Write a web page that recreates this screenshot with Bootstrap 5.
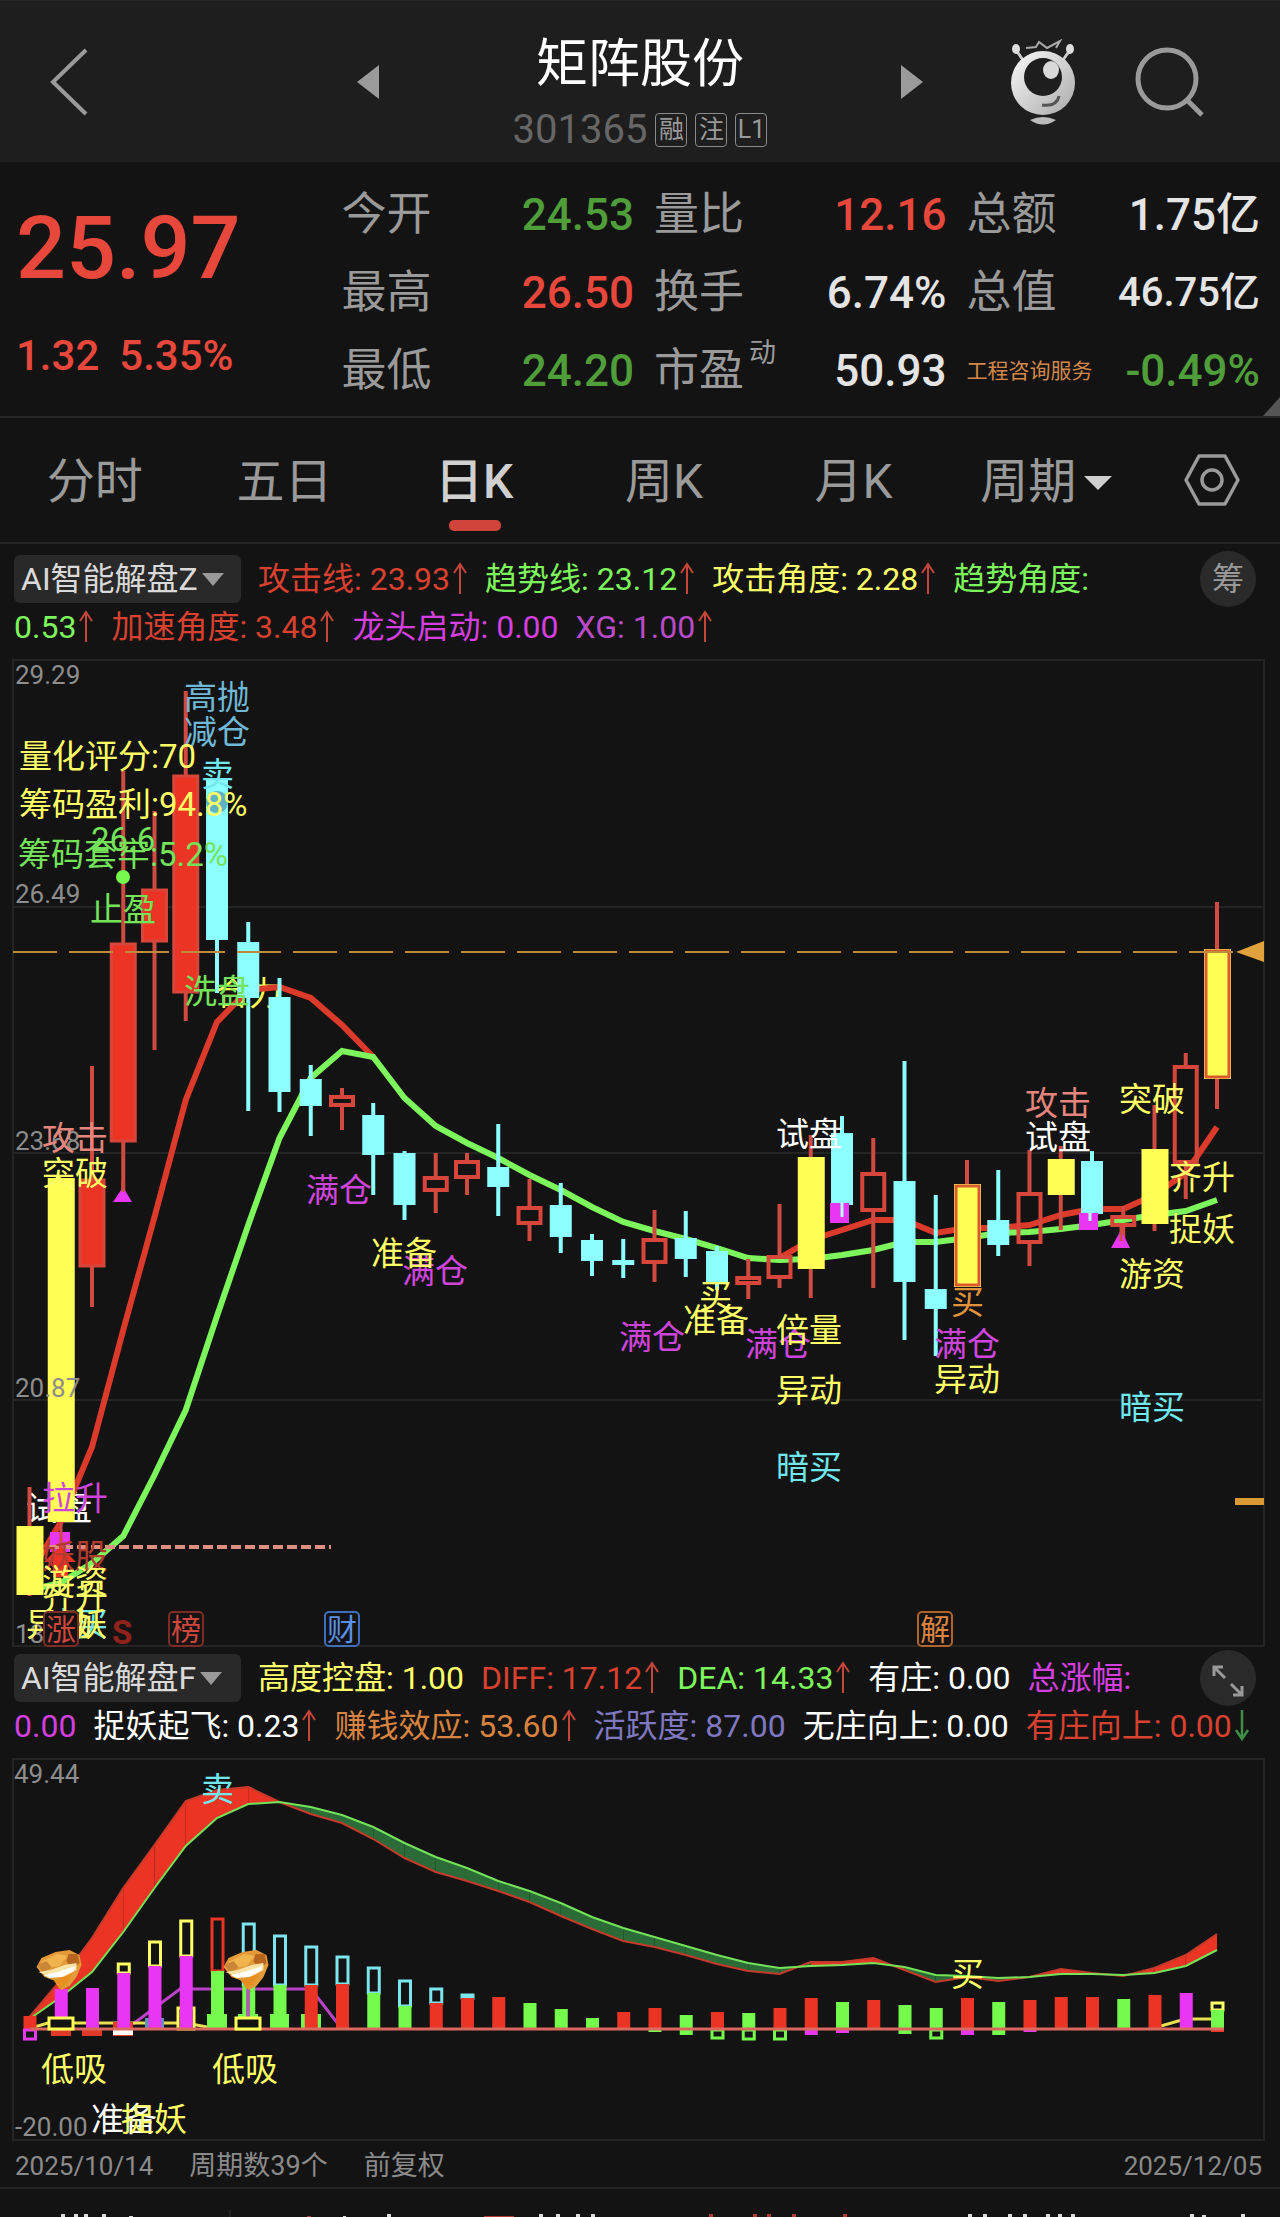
<!DOCTYPE html>
<html lang="zh-CN" data-bs-theme="dark">
<head>
<meta charset="utf-8">
<meta name="viewport" content="width=device-width, initial-scale=1">
<title>矩阵股份 301365</title>
<link href="https://cdn.jsdelivr.net/npm/bootstrap@5.3.0/dist/css/bootstrap.min.css" rel="stylesheet">
<style>
body{background:#131313;color:#e4e4e4;font-family:Roboto,"Noto Sans CJK SC",sans-serif;overflow-x:hidden}
button,a{color:inherit;font:inherit;text-decoration:none}
.plain-btn{background:none;border:0;padding:0;line-height:1}
.topbar{background:#1e1e1e;height:162px;border-top:1px solid #262626}
.side-l{width:380px;padding-left:48px}
.side-r{width:380px;gap:55px;padding-right:75px}
.stock-name{font-size:52px;line-height:64px;color:#fff;margin:32px 0 11px;font-weight:400}
.stock-code{font-size:40px;line-height:44px;color:#666}
.flag{font-size:25px;line-height:32px;height:34px;width:32px;border:1px solid #8a8a8a;border-radius:4px;color:#9a9a9a;text-align:center}
.quote{height:256px;border-bottom:2px solid #262626;padding:14px 20px 0 16px;display:grid;grid-template-columns:305fr 292fr 292fr 293fr;column-gap:20px}
.quote dl{margin:0}
.q-line{display:flex;justify-content:space-between;align-items:center;height:78px}
.q-line dt{font-weight:400;font-size:45px;color:#9a9a9a;line-height:60px;white-space:nowrap}
.q-line dd{margin:0;font-size:44px;line-height:60px;white-space:nowrap;font-weight:500}
.q-line dd.cap{font-size:40px}
.q-line dt.sector{font-size:21px;color:#d2884a}
.q-line sup{font-size:27px;top:-24px;line-height:1;margin-left:5px}
.q-price{font-size:88px;line-height:100px;font-weight:500;padding-top:22px}
.q-chg{font-size:42px;line-height:50px;padding-top:33px;gap:20px;font-weight:500}
.up{color:#e8473c}.down{color:#4f9e3a}
.fold{right:0;bottom:0;border-left:17px solid transparent;border-bottom:19px solid #555}
.tabs{height:126px;border-bottom:2px solid #242424;font-size:48px;color:#9a9a9a}
.tabs a{flex:190 0 0;text-align:center;line-height:128px;position:relative}
.tabs .cycle{flex:196 0 0}
.tabs .gear{flex:136 0 0;padding-bottom:2px}
.tabs a.on{color:#d0d0d0;font-weight:500}
.tabs a.on::after{content:"";position:absolute;left:50%;margin-left:-25px;bottom:11px;width:52px;height:11px;border-radius:5px;background:#cf453b}
.legend-box{padding:11px 0 1px 14px;font-size:32px;line-height:48px;white-space:pre;position:relative}
.legend-box.second{padding-top:4px;padding-bottom:2px}
.l-row{display:flex;height:48px;gap:17px}
.pick{background:#292929;color:#dadada;border:0;border-radius:6px;padding:0 10px 0 7px;height:48px;width:227px;line-height:48px;display:flex;align-items:center;gap:4px}
.l-row svg.ar{width:16px;height:34px;margin-left:2px;vertical-align:-5px}
.round{position:absolute;right:24px;top:7px;width:56px;height:56px;border-radius:50%;background:#2a2a2a;border:0;color:#999;padding:0;line-height:56px}
.second .round{top:0}
.c-r{color:#d8402f}.c-g{color:#7df55c}.c-y{color:#ffff6a}.c-m{color:#d53fe0}.c-p{color:#b94bc8}.c-w{color:#fff}.c-o{color:#d88440}.c-v{color:#7f78c0}
.plot{display:block;width:100%;height:auto}
.plot text{font-size:33px}
.plot .ax{font-size:26px;fill:#8d8d8d}
.plot .tg{font-size:30px}
.foot{height:45px;padding:0 18px 0 15px;gap:36px;font-size:27px;color:#8a8a8a;border-bottom:2px solid #242424;line-height:38px}
.foot time{font-size:26px}
</style>
<script src="https://cdn.jsdelivr.net/npm/bootstrap@5.3.0/dist/js/bootstrap.bundle.min.js"></script>
</head>
<body>
<svg width="0" height="0" class="position-absolute" aria-hidden="true">
 <symbol id="au" viewBox="0 0 16 34"><path d="M8 33V3M2 12L8 3l6 9" fill="none" stroke="#c4463b" stroke-width="2"/></symbol>
 <symbol id="ad" viewBox="0 0 16 34"><path d="M8 2v29M2 22l6 9 6-9" fill="none" stroke="#3f8f49" stroke-width="2.5"/></symbol>
 <symbol id="gem" viewBox="0 0 46 40">
  <path d="M1 17L6 8 20 2 34 0 44 5 46 15 41 27 34 36 26 40 20 31 9 27Z" fill="#e39a38"/>
  <path d="M6 12L22 4 32 6 24 16 10 18Z" fill="#f2b54e"/><path d="M33 4h9l2 9-8 6-5-8Z" fill="#b8661f"/>
  <path d="M2 15l9-4 5 6-8 6Z" fill="#c98638"/><path d="M3 22l12-2 14-5 12-2v7l-13 7-15-1Z" fill="#fbe3a8"/>
  <path d="M8 25l14-3 18-6-2 5-12 6-12 1Z" fill="#fffefa"/><path d="M18 30l19-6-8 12-5 3Z" fill="#e88f22"/>
 </symbol>
</svg>

<header class="topbar d-flex">
 <div class="side-l d-flex align-items-center">
  <button class="plain-btn" aria-label="返回"><svg width="44" height="70" viewBox="0 0 44 70"><path d="M38 3L5 35l33 32" fill="none" stroke="#9a9a9a" stroke-width="4"/></svg></button>
  <button class="plain-btn ms-auto" aria-label="上一只"><svg width="24" height="34" viewBox="0 0 24 34"><path d="M23 0v34L1 17z" fill="#9b9b9b"/></svg></button>
 </div>
 <div class="flex-fill text-center">
  <h1 class="stock-name">矩阵股份</h1>
  <div class="d-flex justify-content-center align-items-center gap-1 stock-code"><span>301365</span><span class="flag ms-1">融</span><span class="flag ms-1">注</span><span class="flag ms-1">L1</span></div>
 </div>
 <div class="side-r d-flex align-items-center">
  <button class="plain-btn me-auto" aria-label="下一只"><svg width="24" height="34" viewBox="0 0 24 34"><path d="M1 0v34L23 17z" fill="#9b9b9b"/></svg></button>
  <button class="plain-btn" aria-label="助手"><svg width="70" height="86" viewBox="0 0 70 86">
   <defs><linearGradient id="rb" x1="0" y1="0" x2="1" y2="1"><stop offset="0" stop-color="#fafafa"/><stop offset="1" stop-color="#a9a9a9"/></linearGradient></defs>
   <path d="M17 24Q13 18 8 11M53 24Q57 18 62 11" stroke="#ccc" stroke-width="3" fill="none"/>
   <ellipse cx="8" cy="10" rx="4" ry="5" fill="#ddd"/><ellipse cx="62" cy="10" rx="4" ry="5" fill="#ddd"/>
   <path d="M18 9l10-1 3-5 8 6 13-7-4 7" stroke="#aaa" stroke-width="2" fill="none"/>
   <circle cx="35" cy="44" r="32" fill="url(#rb)"/><circle cx="35" cy="38" r="19" fill="#1e1e1e"/>
   <ellipse cx="43" cy="31" rx="8" ry="9" fill="#d9d9d9"/><path d="M34 66q15 2 17-9" stroke="#555" stroke-width="3" fill="none"/>
   <path d="M22 81q13-6 26 0-13 9-26 0" fill="#bbb"/></svg></button>
  <button class="plain-btn" aria-label="搜索"><svg width="72" height="74" viewBox="0 0 72 74"><circle cx="34" cy="34" r="29" fill="none" stroke="#9a9a9a" stroke-width="5"/><path d="M54 55l15 15" stroke="#9a9a9a" stroke-width="5"/></svg></button>
 </div>
</header>

<section class="quote position-relative">
 <div class="up"><div class="q-price">25.97</div><div class="q-chg d-flex"><span>1.32</span><span>5.35%</span></div></div>
 <dl>
  <div class="q-line"><dt>今开</dt><dd class="down">24.53</dd></div>
  <div class="q-line"><dt>最高</dt><dd class="up">26.50</dd></div>
  <div class="q-line"><dt>最低</dt><dd class="down">24.20</dd></div>
 </dl>
 <dl>
  <div class="q-line"><dt>量比</dt><dd class="up">12.16</dd></div>
  <div class="q-line"><dt>换手</dt><dd>6.74%</dd></div>
  <div class="q-line"><dt>市盈<sup>动</sup></dt><dd>50.93</dd></div>
 </dl>
 <dl>
  <div class="q-line"><dt>总额</dt><dd>1.75亿</dd></div>
  <div class="q-line"><dt>总值</dt><dd class="cap">46.75亿</dd></div>
  <div class="q-line"><dt class="sector">工程咨询服务</dt><dd class="down">-0.49%</dd></div>
 </dl>
 <span class="fold position-absolute"></span>
</section>

<nav class="tabs d-flex">
 <a href="#">分时</a><a href="#">五日</a><a href="#" class="on">日K</a><a href="#">周K</a><a href="#">月K</a>
 <a href="#" class="cycle">周期<svg width="28" height="14" viewBox="0 0 28 14" class="align-middle ms-2 mb-1"><path d="M0 0h28L14 14z" fill="#cfcfcf"/></svg></a>
 <button class="plain-btn gear" aria-label="设置"><svg width="56" height="52" viewBox="0 0 56 52"><path d="M15 2h26l13 24-13 24H15L2 26z" fill="none" stroke="#9a9a9a" stroke-width="3.5" stroke-linejoin="round"/><circle cx="28" cy="26" r="10" fill="none" stroke="#9a9a9a" stroke-width="3.5"/></svg></button>
</nav>

<section class="legend-box"><div class="l-row"><button class="pick">AI智能解盘Z<svg width="22" height="13" viewBox="0 0 22 13"><path d="M0 0h22L11 13z" fill="#999"/></svg></button><span class="c-r">攻击线: 23.93<svg class="ar"><use href="#au"/></svg></span><span class="c-g">趋势线: 23.12<svg class="ar"><use href="#au"/></svg></span><span class="c-y">攻击角度: 2.28<svg class="ar"><use href="#au"/></svg></span><span class="c-g">趋势角度:</span></div><div class="l-row"><span class="c-g">0.53<svg class="ar"><use href="#au"/></svg></span><span class="c-r">加速角度: 3.48<svg class="ar"><use href="#au"/></svg></span><span class="c-m">龙头启动: 0.00</span><span class="c-p">XG: 1.00<svg class="ar"><use href="#au"/></svg></span></div><button class="round">筹</button></section>

<svg class="plot" viewBox="0 652 1280 998" role="img" aria-label="日K线图">
 <path d="M13 660H1264V1646H13ZM13 907H1264M13 1153H1264M13 1400H1264" fill="none" stroke="#242424" stroke-width="2"/>
 <path d="M1264 941V962L1236 952Z" fill="#e0a23c"/><path d="M1235 1501.500H1264" stroke="#d99a34" stroke-width="7"/>
 <g fill="#ffff55"><text x="216" y="1005">合力</text></g>
 <text x="26" y="1520" fill="#fff">试盘</text>
 <g id="ma"></g>
 <g id="candles"></g>
 <g><text class="ax" x="15" y="684">29.29</text><text class="ax" x="15" y="903">26.49</text><text class="ax" x="15" y="1150">23.68</text><text class="ax" x="15" y="1397">20.87</text><text class="ax" x="15" y="1643">18.06</text></g>
 <path d="M13 952H1236" stroke="#c08a3c" stroke-width="2" stroke-dasharray="44 12"/>
 <g fill="#e837f2"><path d="M830 1203h19v20h-19zM1079 1213h19v17h-19zM50 1532h20v20H50zM113 1202h19l-9-15zM1111 1248h19l-9-18z"/></g>
 <path d="M123 1180v12M1121 1227v14M61 1522v40" stroke="#cf4a40" stroke-width="3"/><path d="M842 1203v14M1090 1213v8" stroke="#bff" stroke-width="3"/>
 <path d="M60 1546L76 1562H68V1577H53V1562H44Z" fill="#eb3424"/>
 <path d="M49 1547H331" stroke="#de8f82" stroke-width="4" stroke-dasharray="10 4"/>
 <circle cx="217" cy="802" r="11" fill="#5fb3c4"/><circle cx="123" cy="877" r="7" fill="#74fb4c"/>
 <g fill="#6fb9d6"><text x="184" y="709">高抛</text><text x="184" y="744">减仓</text></g>
 <g fill="#70e8ee"><text x="201" y="786">卖</text><text x="776" y="1479">暗买</text><text x="1119" y="1419">暗买</text><text x="42" y="1636">暗买</text></g>
 <g fill="#74e35a"><text x="18" y="866">筹码套牢:5.2%</text><text x="91" y="851">26.6</text><text x="90" y="921">止盈</text><text x="184" y="1003">洗盘</text></g>
 <g fill="#e3857c"><text x="42" y="1150">攻击</text><text x="1025" y="1115">攻击</text></g>
 <text x="42" y="1568" fill="#b23a2f">妖股</text>
 <g fill="#cf45dc"><text x="42" y="1510">拉升</text><text x="306" y="1202">满仓</text><text x="402" y="1283">满仓</text><text x="619" y="1349">满仓</text><text x="745" y="1356">满仓</text><text x="934" y="1356">满仓</text></g>
 <g fill="#fff"><text x="776" y="1146">试盘</text><text x="1025" y="1149">试盘</text></g>
 <g fill="#ffff66"><text x="19" y="768">量化评分:70</text><text x="19" y="816">筹码盈利:94.8%</text><text x="42" y="1185">突破</text><text x="371" y="1265">准备</text><text x="699" y="1308">买</text><text x="683" y="1332">准备</text><text x="776" y="1342">倍量</text><text x="776" y="1402">异动</text><text x="934" y="1391">异动</text><text x="1119" y="1111">突破</text><text x="1119" y="1286">游资</text><text x="1169" y="1189">齐升</text><text x="1169" y="1241">捉妖</text><text x="42" y="1593">游资</text><text x="42" y="1609">齐升</text><text x="26" y="1636">异动</text><text x="74" y="1636">妖</text></g>
 <text x="951" y="1314" fill="#e0933c">买</text>
 <g fill="#131313" stroke-width="2"><rect x="44" y="1612" width="34" height="34" rx="4" stroke="#7c2b26"/><rect x="169" y="1612" width="34" height="34" rx="4" stroke="#7c2b26"/><rect x="325" y="1612" width="34" height="34" rx="4" stroke="#3f6fb8"/><rect x="918" y="1612" width="34" height="34" rx="4" stroke="#b0642c"/></g>
 <g fill="#cf473d"><text class="tg" x="46" y="1640">涨</text><text class="tg" x="171" y="1640">榜</text><text class="tg" x="327" y="1640" fill="#5a90e6">财</text><text class="tg" x="920" y="1640" fill="#dd8440">解</text></g>
 <text x="112" y="1644" fill="#8f231c" font-weight="700">S</text>
</svg>

<section class="legend-box second"><div class="l-row"><button class="pick">AI智能解盘F<svg width="22" height="13" viewBox="0 0 22 13"><path d="M0 0h22L11 13z" fill="#999"/></svg></button><span class="c-y">高度控盘: 1.00</span><span class="c-r">DIFF: 17.12<svg class="ar"><use href="#au"/></svg></span><span class="c-g">DEA: 14.33<svg class="ar"><use href="#au"/></svg></span><span class="c-w">有庄: 0.00</span><span class="c-m">总涨幅:</span></div><div class="l-row"><span class="c-m">0.00</span><span class="c-w">捉妖起飞: 0.23<svg class="ar"><use href="#au"/></svg></span><span class="c-o">赚钱效应: 53.60<svg class="ar"><use href="#au"/></svg></span><span class="c-v">活跃度: 87.00</span><span class="c-w">无庄向上: 0.00</span><span class="c-r">有庄向上: 0.00<svg class="ar"><use href="#ad"/></svg></span></div><button class="round" aria-label="展开"><svg width="32" height="32" viewBox="0 0 32 32"><path d="M2 11V2h9M2 2l11 11M30 21v9h-9M30 30L19 19" fill="none" stroke="#999" stroke-width="3"/></svg></button></section>

<svg class="plot" viewBox="0 1752 1280 392" role="img" aria-label="指标图">
 <path d="M13 1759H1264V2140H13Z" fill="none" stroke="#242424" stroke-width="2"/>
 <text class="ax" x="14" y="1783">49.44</text><text class="ax" x="15" y="2136">-20.00</text>
 <g id="cloud"></g>
 <path d="M133 2024L180 1989H311L342 2029" fill="none" stroke="#b843c6" stroke-width="3"/>
 <path d="M31 2028L48 2023H186L207 2027M1161 2026L1185 2019H1217" fill="none" stroke="#e8e050" stroke-width="3"/>
 <path d="M51 2029h20v7H51zM82 2029h20v7H82zM113 2022h20v14H113z" fill="#e03a28"/><path d="M113 2030h20v5H113z" fill="#fff"/>
 <path d="M145 2018h19v11H145z" fill="#5f93ba"/><path d="M178 2008h16v21h-16z" fill="#131313" stroke="#ffff55" stroke-width="3"/>
 <path d="M207 2014h20v15h-20zM238 2014h20v15h-20zM270 2014h19v15h-19zM301 2014h20v15h-20z" fill="#74fb4c"/>
 <g id="bars"></g>
 <path d="M30 2029H1224" stroke="#d9685e" stroke-width="3"/>
 <path d="M248 1988v30" stroke="#a765a8" stroke-width="4"/>
 <path d="M49 2018h24v11H49zM236 2018h24v11H236z" fill="#131313" stroke="#ffff55" stroke-width="3"/>
 <use href="#gem" x="35" y="1950" width="47" height="40"/><use href="#gem" x="222" y="1950" width="47" height="40"/>
 <text x="201" y="1801" fill="#70e8ee">卖</text>
 <g fill="#ffff66"><text x="951" y="1986">买</text><text x="41" y="2081">低吸</text><text x="212" y="2081">低吸</text></g>
 <text x="91" y="2131" fill="#fff">准备</text><text x="121" y="2131" fill="#ffff66">捉妖</text>
</svg>

<footer>
 <div class="foot d-flex align-items-center"><time>2025/10/14</time><span>周期数39个</span><span>前复权</span><time class="ms-auto">2025/12/05</time></div>
 <svg class="plot" viewBox="0 2189 1280 28" aria-hidden="true"><path d="M230 2210v7" stroke="#333"/><path d="M61 2214h4v3h-4zM74 2214h4v3h-4zM84 2214h4v3h-4zM102 2214h4v3h-4zM129 2216h4v1h-4zM387 2214h4v3h-4zM343 2216h3v1h-3zM539 2214h4v3h-4zM556 2214h4v3h-4zM576 2214h4v3h-4zM591 2214h4v3h-4zM968 2214h4v3h-4zM983 2214h4v3h-4zM1008 2214h4v3h-4zM1023 2214h4v3h-4zM1046 2214h4v3h-4zM1058 2214h4v3h-4zM1071 2214h4v3h-4zM1190 2214h4v3h-4zM1202 2215h4v2h-4zM1241 2214h4v3h-4z" fill="#ddd"/><path d="M307 2216h4v1h-4zM484 2216h30v1h-30zM709 2214h4v3h-4zM753 2214h4v3h-4zM767 2214h4v3h-4zM792 2214h4v3h-4zM843 2214h4v3h-4z" fill="#b23a30"/></svg>
</footer>

<script>
const X = i => 29.5 + 31.25 * i;
const put = (id, html) => { document.getElementById(id).innerHTML = html; };
// [kind, high, bodyTop, bodyBottom, low]; y yellow, r filled red, c cyan, h hollow red, o outlined yellow
const K = [['y',1487,1526,1595,1596],['y',1178,1178,1522,1522],['r',1066,1179,1267,1307],['r',771,943,1142,1192],['r',811,889,942,1050],['r',691,775,993,1021],['c',778,780,940,993],['c',922,942,998,1111],['c',978,997,1092,1112],['c',1065,1079,1106,1136],['h',1088,1095,1107,1130],['c',1103,1115,1155,1195],['c',1151,1153,1205,1220],['h',1153,1176,1192,1213],['h',1153,1160,1179,1195],['c',1124,1167,1187,1216],['h',1179,1206,1225,1241],['c',1183,1205,1237,1253],['c',1234,1240,1261,1276],['c',1239,1260,1265,1278],['h',1210,1238,1264,1282],['c',1211,1238,1259,1277],['c',1246,1251,1283,1290],['h',1259,1276,1285,1299],['h',1204,1255,1279,1288],['y',1135,1157,1269,1298],['c',1116,1133,1205,1217],['h',1138,1172,1212,1288],['c',1061,1181,1282,1340],['c',1195,1289,1309,1356],['o',1160,1184,1287,1287],['c',1170,1220,1245,1256],['h',1150,1192,1244,1266],['y',1146,1159,1195,1230],['c',1151,1161,1214,1221],['h',1206,1215,1227,1240],['y',1105,1149,1224,1231],['h',1053,1065,1164,1199],['o',902,949,1079,1109]];
const rect = (x, y, w, h, a) => `<rect x="${x}" y="${y}" width="${w}" height="${h}" ${a}/>`;
put('candles', K.map(([k, hi, t, b, lo], i) => {
  const x = X(i), col = k === 'c' ? '#8cffff' : '#cf4a40';
  let s = `<path d="M${x} ${hi}V${t}M${x} ${b}V${lo}" stroke="${col}" stroke-width="4"/>`;
  if (k === 'y') s += rect(x - 13, t, 27, b - t, 'fill="#ffff55"');
  if (k === 'c') s += rect(x - 11, t, 22, b - t, 'fill="#8cffff"');
  if (k === 'r') s += rect(x - 12, t + 1, 24, b - t - 2, 'fill="#eb3424" stroke="#d8453a" stroke-width="3"');
  if (k === 'h') s += rect(x - 11, t + 2, 22, b - t - 4, 'fill="none" stroke="#d8453a" stroke-width="4"');
  if (k === 'o') s += rect(x - 13, t, 27, b - t, 'fill="#ffff66"') + rect(x - 11, t + 2, 23, b - t - 4, 'fill="#ffff55" stroke="#d95a2c" stroke-width="3"');
  return s;
}).join(''));
const line = (a, s, c, w) => `<polyline points="${a.map((y, i) => X(i + s) + ',' + y).join(' ')}" fill="none" stroke="${c}" stroke-width="${w}"/>`;
put('ma',
  line([1575,1522,1447,1330,1217,1100,1022,990,987,998,1025,1057], 0, '#dc3a2a', 6) +
  line([1258,1240,1230,1220,1220,1233,1228,1228,1225,1215,1209,1209,1195,1173,1127], 24, '#dc3a2a', 6) +
  line([1590,1583,1563,1536,1475,1410,1316,1225,1138,1078,1051,1057,1098,1126,1143,1158,1175,1190,1207,1222,1231,1239,1248,1258,1260,1259,1255,1250,1242,1242,1238,1233,1232,1229,1225,1220,1215,1211,1200], 0, '#7df55c', 6));
const diff = [2017,1980,1938,1888,1845,1801,1790,1787,1802,1814,1823,1839,1858,1872,1881,1891,1902,1916,1929,1941,1947,1955,1964,1971,1974,1962,1962,1958,1970,1982,1977,1981,1977,1969,1973,1976,1968,1955,1934];
const dea = [2019,1997,1972,1932,1888,1846,1818,1804,1802,1807,1815,1827,1843,1857,1868,1881,1891,1903,1917,1928,1937,1946,1955,1963,1968,1966,1965,1963,1967,1975,1976,1978,1977,1974,1974,1975,1973,1966,1950];
let cloud = '';
for (let i = 0; i < 38; i++) {
  const up = diff[i] + diff[i + 1] < dea[i] + dea[i + 1];
  cloud += `<path d="M${X(i)} ${diff[i]}L${X(i + 1)} ${diff[i + 1]}V${dea[i + 1]}L${X(i)} ${dea[i]}Z" fill="${up ? '#eb3424' : '#2a6b37'}"/>`;
}
put('cloud', cloud + line(diff, 0, '#c63a2c', 2) + line(dea, 0, '#74e35a', 2));
const C = {r:'#eb3424', g:'#74fb4c', m:'#e837f2', y:'#ffff66', c:'#7ce6ee'};
// [fill, top, outline colour, outline top]
const B = [['r',2016],['m',1989],['m',1988],['m',1973,'y',1964],['m',1966,'y',1942],['m',1956,'y',1921],['g',1971,'r',1919],['g',1985,'c',1924],['g',1985,'c',1936],['r',1985,'c',1947],['r',1984,'c',1957],['g',1993,'c',1968],['g',2006,'c',1981],['r',2003,'c',1989],['r',1998,'c',1995],['r',1997],['g',2003],['g',2009],['g',2018],['r',2012],['r',2008],['g',2015],['r',2012],['g',2013],['r',2008],['r',1998],['g',2002],['r',2000],['g',2005],['g',2008],['r',1998],['g',2002],['r',2000],['r',1997],['r',1997],['g',1999],['r',1995],['m',1993],['g',2010,'y',2003]];
const below = {0:['m',2040],20:['g',2032],21:['g',2035],22:['g',2039],23:['g',2040],24:['g',2040],25:['m',2035],26:['m',2033],28:['g',2034],29:['g',2039],30:['m',2035],31:['g',2035],32:['m',2032],38:['r',2032]};
put('bars', B.map(([c, t, oc, ot], i) => {
  const x = X(i) - 6;
  let s = rect(x, t, 13, 2029 - t, `fill="${C[c]}"`);
  if (oc) s = rect(x + 1, ot, 11, Math.max(t - ot, 1), `fill="#131313" stroke="${C[oc]}" stroke-width="3"`) + s;
  const d = below[i];
  if (d) s += d[1] > 2036 ? rect(x + 1, 2030, 11, d[1] - 2031, `fill="#131313" stroke="${C[d[0]]}" stroke-width="3"`) : rect(x, 2029, 13, d[1] - 2029, `fill="${C[d[0]]}"`);
  return s;
}).join(''));
</script>
</body>
</html>
